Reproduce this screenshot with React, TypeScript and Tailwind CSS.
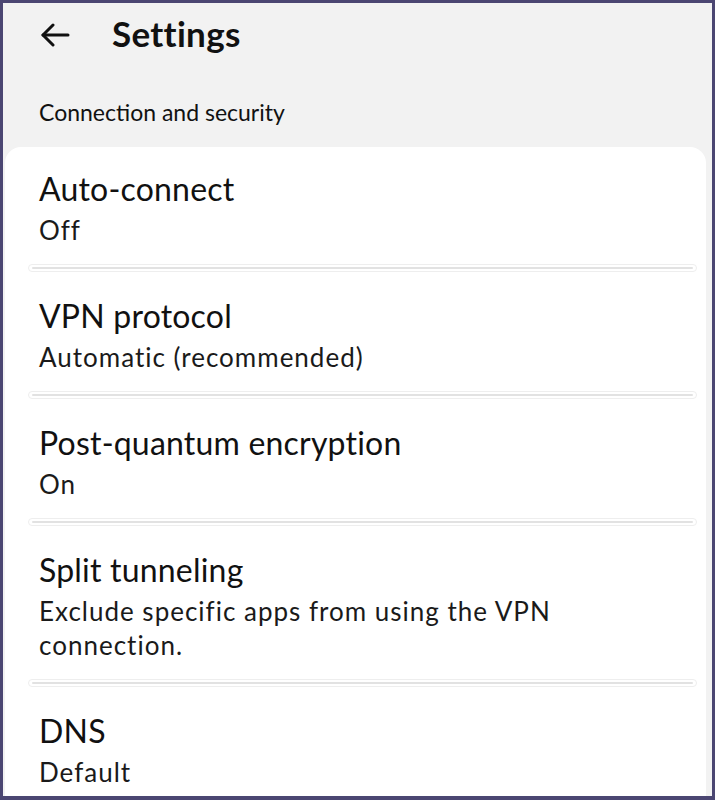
import React from "react";

interface SettingRow {
    title: string;
    value: string;
}

const rows: SettingRow[] = [
    { title: "Auto-connect", value: "Off" },
    { title: "VPN protocol", value: "Automatic (recommended)" },
    { title: "Post-quantum encryption", value: "On" },
    { title: "Split tunneling", value: "Exclude specific apps from using the VPN connection." },
    { title: "DNS", value: "Default" },
];

function Divider() {
    return (
        <div className="ml-[23px] mr-[9px] h-[8px] rounded-full border border-[#eeeeee] flex items-center px-[3px]">
            <div className="h-[2px] w-full bg-[#e2e2e2] rounded-full" />
        </div>
    );
}

export default function App() {
    return (
        <div
            className="w-[715px] h-[800px] overflow-hidden border-[3px] border-b-[4px] border-[#4b4672] bg-[#f2f2f2] text-[#111111]"
            style={{ fontFamily: "Lato, 'Open Sans', sans-serif" }}
        >
            {/* header */}
            <div className="flex items-center h-[64px] pl-[37px]">
                <svg width="30" height="24" viewBox="0 0 30 24" fill="none" stroke="#111" strokeWidth="3" strokeLinecap="round" strokeLinejoin="round" className="-mt-[1px]">
                    <path d="M28 12H3" />
                    <path d="M13 2L3 12l10 10" />
                </svg>
                <h1 className="ml-[42px] -mt-[3px] text-[35px] font-bold leading-none tracking-[0.3px]">Settings</h1>
            </div>
            <div className="pl-[36px] pt-[31px] h-[80px] text-[23px] leading-[28px]">Connection and security</div>

            {/* card */}
            <div className="ml-[2px] mr-[6px] bg-white rounded-t-[16px] pt-[24px] h-[660px]">
                {rows.map((row, i) => (
                    <div key={row.title}>
                        <div className="pl-[34px]">
                            <div className="text-[32px] leading-[36px] tracking-[0.2px]">{row.title}</div>
                            <div className="mt-[6px] text-[26px] leading-[34px] text-[#1a1a1a] max-w-[580px] tracking-[1px]">{row.value}</div>
                        </div>
                        {i < rows.length - 1 && (
                            <div className="mt-[17px] mb-[26px]">
                                <Divider />
                            </div>
                        )}
                    </div>
                ))}
            </div>
        </div>
    );
}
